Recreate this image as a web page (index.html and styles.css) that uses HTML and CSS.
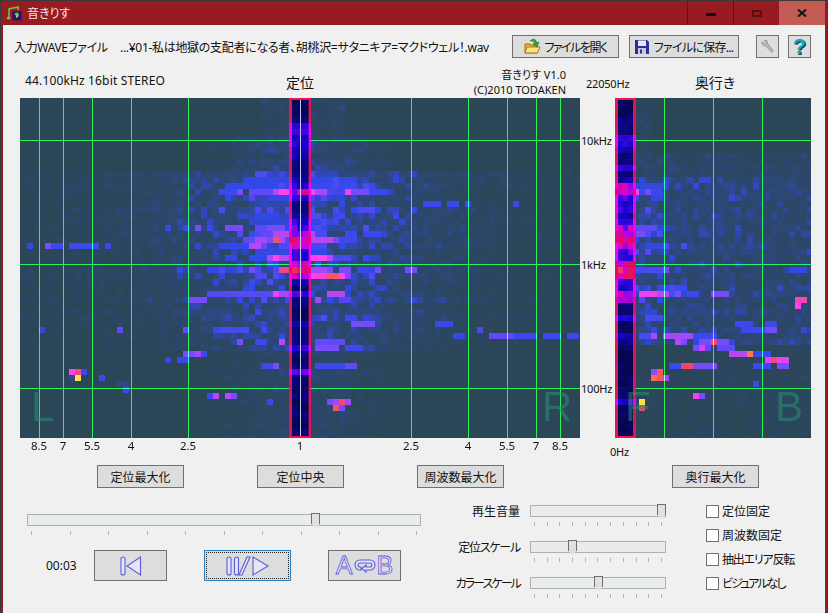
FILE: index.html
```html
<!DOCTYPE html>
<html lang="ja">
<head>
<meta charset="utf-8">
<title>音きりす</title>
<link rel="stylesheet" href="styles.css">
</head>
<body>
<div class="window">
  <header class="titlebar">
    <svg class="app-icon" width="16" height="16" viewBox="0 0 16 16">
      <rect x="6" y="6" width="10" height="10" fill="#7a1030"/>
      <rect x="7" y="7" width="8" height="8" fill="#0c1a90"/>
      <path d="M10 8l3 1-1 3-2 1z" fill="#e8c040"/>
      <path d="M3 13V4l9-2v3" fill="none" stroke="#6fc040" stroke-width="1.6"/>
      <ellipse cx="2.6" cy="13" rx="2" ry="1.6" fill="#6fc040"/>
      <ellipse cx="10.6" cy="9" rx="2" ry="1.6" fill="#6fc040"/>
    </svg>
    <span class="title-text">音きりす</span>
    <div class="win-buttons">
      <div class="win-btn"><span class="glyph-min"></span></div>
      <div class="win-btn"><span class="glyph-max"></span></div>
      <div class="win-btn win-close">
        <svg width="10" height="8" viewBox="0 0 10 8"><path d="M1 0.5l8 7M9 0.5l-8 7" stroke="#111" stroke-width="2" fill="none"/></svg>
      </div>
    </div>
  </header>

  <main class="client">
    <div class="toprow">
      <span class="input-label">入力WAVEファイル</span>
      <span class="path">...¥01-私は地獄の支配者になる者、胡桃沢=サタニキア=マクドウェル！.wav</span>
      <button class="btn btn-open">
        <svg width="17" height="17" viewBox="0 0 17 17">
          <path d="M1 6h5l1 1h6v8H1z" fill="#e8b830" stroke="#9a7010"/>
          <path d="M3 9h13l-2.500 6H1z" fill="#fbe27a" stroke="#a87c18"/>
          <path d="M6 3c3-3 6-2 7 2l2-1-2 5-4-3 2-.5C10 3.500 8 2.500 6 3z" fill="#3aa030" stroke="#1c6a1c" stroke-width=".6"/>
        </svg>
        <span class="label-open">ファイルを開く</span>
      </button>
      <button class="btn btn-save">
        <svg width="14" height="14" viewBox="0 0 14 14">
          <path d="M0 0h12l2 2v12H0z" fill="#2a2f9c"/>
          <rect x="3" y="0.500" width="8" height="5.500" fill="#e8e8f4"/>
          <rect x="3" y="8" width="8" height="6" fill="#c8c8dc"/>
          <rect x="5" y="9.500" width="2" height="4" fill="#2a2f9c"/>
        </svg>
        <span class="label-save">ファイルに保存...</span>
      </button>
      <button class="btn btn-icon btn-wrench">
        <svg width="13" height="14" viewBox="0 0 13 14">
          <path d="M1 1.500l2 2 1.500-.5.500-1.500-2-1.500c2-.5 4 1 3.500 3.500l6 7.500-1.500 1.500L4.500 6C2 6.500 .5 3.500 1 1.500z" fill="#b8b8b8" stroke="#8a8a8a" stroke-width=".7"/>
        </svg>
      </button>
      <button class="btn btn-icon btn-help"><span class="help-mark">?</span></button>
    </div>

    <div class="panels">
      <div class="caption-main">
        <span class="format">44.100kHz 16bit STEREO</span>
        <span class="axis-title">定位</span>
        <span class="version">音きりす V1.0<br>(C)2010 TODAKEN</span>
      </div>
      <div class="hz-scale">
        <span class="hz" style="left:6px;top:26px">22050Hz</span>
        <span class="hz" style="left:1px;top:83px">10kHz</span>
        <span class="hz" style="left:1px;top:207px">1kHz</span>
        <span class="hz" style="left:1px;top:331px">100Hz</span>
        <span class="hz" style="left:30px;top:394px">0Hz</span>
      </div>
      <div class="caption-depth"><span class="axis-title">奥行き</span></div>

      <div class="spectrum">
        <canvas id="pan" width="560" height="340"></canvas>
        <span class="corner corner-l">L</span>
        <span class="corner corner-r">R</span>
      </div>
      <div class="spectrum spectrum-depth">
        <canvas id="depth" width="196" height="340"></canvas>
        <span class="corner corner-f">F</span>
        <span class="corner corner-b">B</span>
      </div>

      <div class="pan-ticks">
        <span class="pan-tick" style="left:19px">8.5</span>
        <span class="pan-tick" style="left:43px">7</span>
        <span class="pan-tick" style="left:72px">5.5</span>
        <span class="pan-tick" style="left:111px">4</span>
        <span class="pan-tick" style="left:168px">2.5</span>
        <span class="pan-tick" style="left:280px">1</span>
        <span class="pan-tick" style="left:391px">2.5</span>
        <span class="pan-tick" style="left:448px">4</span>
        <span class="pan-tick" style="left:487px">5.5</span>
        <span class="pan-tick" style="left:516px">7</span>
        <span class="pan-tick" style="left:540px">8.5</span>
      </div>
      <div class="tick-spacer"></div>

      <div class="pan-actions">
        <button class="btn btn-wide">定位最大化</button>
        <button class="btn btn-wide">定位中央</button>
        <button class="btn btn-wide">周波数最大化</button>
      </div>
      <div class="depth-actions">
        <button class="btn btn-wide">奥行最大化</button>
      </div>
    </div>

    <div class="bottom">
      <div class="transport">
        <div class="slider slider-seek">
          <div class="track"><span class="thumb" style="left:283px"></span></div>
          <div class="ticks"></div>
        </div>
        <div class="transport-row">
          <span class="time">00:03</span>
          <button class="btn btn-media btn-skip">
            <svg width="22" height="20" viewBox="0 0 22 20">
              <rect x="1" y="1" width="4" height="18" rx="2" class="outline"/>
              <path d="M20.500 1v18L7 10z" class="outline"/>
            </svg>
          </button>
          <button class="btn btn-media btn-play">
            <span class="focus-ring">
              <svg width="43" height="20" viewBox="0 0 43 20">
                <rect x="1" y="1" width="4" height="18" rx="2" class="outline"/>
                <rect x="8.500" y="1" width="4" height="18" rx="2" class="outline"/>
                <path d="M21 1h3l-8 18h-3z" class="outline"/>
                <path d="M27 1v18l15-9z" class="outline"/>
              </svg>
            </span>
          </button>
          <button class="btn btn-media btn-ab">
            <span class="ab-letter">A</span>
            <svg width="24" height="14" viewBox="0 0 24 14">
              <path d="M7 1h10a5 5 0 0 1 0 10h-4v2l-4-3.500 4-3.500v2h4a2 2 0 0 0 0-4H7a2 2 0 0 0 0 4h1v3H7A5 5 0 0 1 7 1z" class="outline"/>
            </svg>
            <span class="ab-letter">B</span>
          </button>
        </div>
      </div>

      <div class="mixer">
        <div class="mixer-row">
          <span class="mixer-label">再生音量</span>
          <div class="slider slider-small">
            <div class="track"><span class="thumb" style="left:126px"></span></div>
            <div class="ticks"></div>
          </div>
        </div>
        <div class="mixer-row">
          <span class="mixer-label tight-1">定位スケール</span>
          <div class="slider slider-small">
            <div class="track"><span class="thumb" style="left:37px"></span></div>
            <div class="ticks"></div>
          </div>
        </div>
        <div class="mixer-row">
          <span class="mixer-label tight-2">カラースケール</span>
          <div class="slider slider-small">
            <div class="track"><span class="thumb" style="left:63px"></span></div>
            <div class="ticks"></div>
          </div>
        </div>
      </div>

      <div class="checks">
        <label class="check"><span class="box"></span>定位固定</label>
        <label class="check"><span class="box"></span>周波数固定</label>
        <label class="check tight-1"><span class="box"></span>抽出エリア反転</label>
        <label class="check tight-2"><span class="box"></span>ビジュアルなし</label>
      </div>
    </div>
  </main>
</div>
<script src="script.js"></script>
</body>
</html>
```
FILE: styles.css
```css
* { box-sizing: border-box; }
html, body { margin: 0; padding: 0; }
body {
  width: 828px;
  height: 613px;
  overflow: hidden;
  font-family: "Noto Sans", "Noto Sans CJK JP", sans-serif;
  font-size: 12px;
  color: #111;
  font-feature-settings: "palt";
}
.window {
  width: 828px;
  height: 613px;
  border: 1px solid #3a3a3a;
  background: #971b20;
  display: flex;
  flex-direction: column;
}
.titlebar {
  height: 24px;
  flex: none;
  display: flex;
  align-items: center;
  padding-left: 5px;
  color: #f4e4e4;
}
.app-icon { flex: none; }
.title-text { margin-left: 5px; font-size: 12px; }
.win-buttons { margin-left: auto; margin-right: 2px; display: flex; height: 24px; }
.win-btn {
  width: 46px;
  display: flex;
  align-items: center;
  justify-content: center;
  border-left: 1px solid #5c1216;
}
.win-close { background: #c25b52; border-left: 0; }
.glyph-min { width: 10px; height: 3px; background: #111; margin-top: 3px; }
.glyph-max { width: 10px; height: 7px; border: 2px solid #5a0f14; }

.client {
  flex: 1;
  margin: 0 2px 2px;
  background: #f0f0f0;
  padding-top: 10px;
  display: flex;
  flex-direction: column;
}
.toprow {
  height: 23px;
  flex: none;
  display: flex;
  align-items: center;
  padding: 0 14px 0 11px;
}
.input-label { width: 106px; flex: none; letter-spacing: -.35px; }
.path { flex: 1; white-space: nowrap; letter-spacing: -.3px; }

.btn {
  border: 1px solid #707070;
  background: #dddddd;
  font: inherit;
  color: #111;
  padding: 0;
  display: flex;
  align-items: center;
  justify-content: center;
  flex: none;
}
.btn-open { width: 107px; height: 23px; gap: 3px; }
.btn-save { width: 110px; height: 23px; gap: 5px; margin-left: 10px; }
.label-open { letter-spacing: -1.500px; }
.label-save { letter-spacing: -.700px; }
.btn-icon { width: 23px; height: 23px; }
.btn-wrench { margin-left: 17px; }
.btn-help { margin-left: 9px; }
.help-mark {
  font-family: "Liberation Sans", sans-serif;
  font-weight: 700;
  font-size: 22px;
  line-height: 22px;
  color: #10a8b8;
  text-shadow: 1px 1px 0 #123050;
}

.panels {
  flex: none;
  display: grid;
  grid-template-columns: 560px 35px 196px;
  grid-template-rows: 40px 340px 27px 23px;
  padding-left: 17px;
}
.caption-main {
  grid-column: 1;
  grid-row: 1;
  display: grid;
  grid-template-columns: 1fr auto 1fr;
  align-items: start;
}
.format { margin: 15px 0 0 5px; line-height: 16px; white-space: nowrap; letter-spacing: .15px; }
.axis-title { margin-top: 15px; font-size: 14px; line-height: 20px; display: block; }
.version {
  margin: 9px 14px 0 0;
  text-align: right;
  line-height: 15px;
  font-size: 11px;
  white-space: nowrap;
}
.hz-scale { grid-column: 2; grid-row: 1 / 4; position: relative; }
.hz {
  position: absolute;
  transform: translateY(-50%);
  font-size: 11px;
  line-height: 14px;
  white-space: nowrap;
  letter-spacing: -.2px;
}
.caption-depth { grid-column: 3; grid-row: 1; display: flex; justify-content: center; padding-left: 4px; }

.spectrum { grid-column: 1; grid-row: 2; position: relative; height: 340px; }
.spectrum-depth { grid-column: 3; }
.spectrum canvas { display: block; }
.corner {
  position: absolute;
  top: 285px;
  font-family: "Liberation Sans", sans-serif;
  font-size: 42px;
  line-height: 48px;
  color: rgba(40, 150, 120, .5);
}
.corner-l { left: 11px; }
.corner-r { left: 522px; }
.corner-f { left: 10px; }
.corner-b { left: 160px; }

.pan-ticks { grid-column: 1; grid-row: 3; position: relative; }
.tick-spacer { grid-column: 3; grid-row: 3; }
.pan-tick {
  position: absolute;
  top: 1px;
  transform: translateX(-50%);
  line-height: 14px;
  font-size: 11.500px;
}
.pan-actions { grid-column: 1; grid-row: 4; display: flex; gap: 73px; padding-left: 77px; }
.depth-actions { grid-column: 3; grid-row: 4; padding-left: 57px; }
.btn-wide { width: 87px; height: 23px; }

.bottom {
  flex: 1;
  display: flex;
  padding: 17px 0 0 24px;
}
.transport { width: 394px; flex: none; padding-top: 9px; }
.track {
  position: relative;
  height: 12px;
  background: #e8ecec;
  border: 1px solid #b0b0b0;
}
.thumb {
  position: absolute;
  top: -2px;
  width: 9px;
  height: 15px;
  background: #e0e0e0;
  border: 1px solid #707070;
  border-bottom: 0;
  clip-path: polygon(0 0, 100% 0, 100% 70%, 50% 100%, 0 70%);
}
.ticks {
  display: flex;
  justify-content: space-between;
  padding: 0 4px;
  margin-top: 5px;
  height: 4px;
}
.ticks i { display: block; width: 1px; height: 4px; background: #b4b4b4; }
.transport-row { display: flex; align-items: center; margin-top: 15px; height: 31px; }
.time { width: 67px; padding-left: 19px; flex: none; }
.btn-media { height: 31px; }
.btn-skip { width: 73px; }
.btn-play {
  width: 87px;
  margin-left: 37px;
  border-color: #2f7fbf;
  padding: 1px;
}
.focus-ring {
  width: 100%;
  height: 100%;
  border: 1px dotted #222;
  display: flex;
  align-items: center;
  justify-content: center;
}
.btn-ab { width: 73px; margin-left: 37px; }
.outline { fill: #e6e6f4; stroke: #5c5cd8; stroke-width: 1.100; }
.ab-letter {
  font-family: "Liberation Sans", sans-serif;
  font-size: 25px;
  line-height: 25px;
  color: #e6e6f4;
  -webkit-text-stroke: .8px #5c5cd8;
}

.mixer { width: 245px; flex: none; margin-left: 0; }
.mixer-row { height: 36px; display: flex; align-items: flex-start; gap: 10px; }
.mixer-label { flex: 1; text-align: right; line-height: 12px; margin-top: 1px; white-space: nowrap; }
.slider-small { width: 136px; flex: none; }

.checks { margin-left: 40px; }
.check { height: 24px; display: flex; align-items: flex-start; gap: 3px; line-height: 13px; white-space: nowrap; }
.box { width: 13px; height: 13px; background: #fff; border: 1px solid #707070; flex: none; }
.tight-1 { letter-spacing: -1.200px; }
.tight-2 { letter-spacing: -1.900px; }
```
FILE: script.js
```js
document.querySelectorAll('.ticks').forEach(function (el) {
  for (var i = 0; i < 11; i++) el.appendChild(document.createElement('i'));
});

function rng(seed) {
  return function () {
    seed |= 0; seed = seed + 0x6D2B79F5 | 0;
    var t = Math.imul(seed ^ seed >>> 15, 1 | seed);
    t = t + Math.imul(t ^ t >>> 7, 61 | t) ^ t;
    return ((t ^ t >>> 14) >>> 0) / 4294967296;
  };
}
function ramp(stops, v) {
  if (v <= stops[0][0]) return stops[0].slice(1);
  for (var i = 1; i < stops.length; i++) {
    if (v <= stops[i][0]) {
      var a = stops[i - 1], b = stops[i], k = (v - a[0]) / (b[0] - a[0]);
      return [a[1] + (b[1] - a[1]) * k, a[2] + (b[2] - a[2]) * k, a[3] + (b[3] - a[3]) * k];
    }
  }
  return stops[stops.length - 1].slice(1);
}
function css(c) { return 'rgb(' + c.map(Math.round).join(',') + ')'; }

var HEAT = [[0, 43, 70, 87], [.2, 45, 72, 130], [.4, 50, 72, 235], [.55, 120, 75, 250], [.7, 255, 65, 240], [.82, 240, 70, 105], [.92, 255, 120, 70], [1, 255, 225, 70]];
var BAND = [[0, 2, 2, 72], [.25, 20, 0, 215], [.45, 120, 0, 245], [.6, 225, 0, 215], [.8, 240, 0, 95], [1, 255, 60, 90]];
var EDGE = [[0, 240, 16, 80], [.15, 240, 16, 80], [.3, 255, 0, 240], [.6, 255, 0, 240], [.75, 240, 0, 95], [1, 240, 16, 80]];
var CELL = 6;

function paint(id, o) {
  var cv = document.getElementById(id), g = cv.getContext('2d');
  var W = cv.width, H = cv.height, r = rng(o.seed);
  var cols = Math.ceil(W / CELL) + 1, rows = Math.ceil(H / CELL) + 1;
  var grid = [];
  for (var j = 0; j < rows; j++) {
    grid[j] = [];
    var y = j * CELL + 98 + 1;
    var gain = 0.6 + r() * 0.5;
    for (var i = 0; i < cols; i++) {
      var x = i * CELL + o.x0;
      var n = o.noise(x, y) * gain * (0.3 + r() * r() * 1.4);
      grid[j][i] = n < 0.025 ? 0 : Math.min(n, .46);
    }
  }
  o.features.forEach(function (f) {
    var j = Math.floor((f[0] - 99) / CELL);
    if (j < 0 || j >= rows) return;
    for (var x = f[1]; x < f[2]; x += CELL) {
      var i = Math.floor((x - o.x0) / CELL);
      if (i >= 0 && i < cols) grid[j][i] = Math.max(grid[j][i], f[3]);
    }
  });
  g.fillStyle = css(HEAT[0].slice(1));
  g.fillRect(0, 0, W, H);
  for (j = 0; j < rows; j++) for (i = 0; i < cols; i++) {
    if (grid[j][i] > 0) {
      g.fillStyle = css(ramp(HEAT, grid[j][i]));
      g.fillRect(i * CELL + o.x0 - o.left, j * CELL + 1, CELL, CELL);
    }
  }
  g.globalCompositeOperation = 'lighten';
  g.fillStyle = '#20f050';
  o.vlines.forEach(function (x) { g.fillRect(x - o.left, 0, 1, H); });
  [140, 264, 388].forEach(function (y) { g.fillRect(0, y - 98, W, 1); });
  g.globalCompositeOperation = 'source-over';

  var b = o.band, bw = b[1] - b[0];
  g.globalAlpha = .93;
  for (j = 0; j < o.profile.length; j++) {
    var v = +o.profile[j] / 10, yy = j * CELL + 1;
    g.fillStyle = css(ramp(EDGE, v));
    g.fillRect(b[0] - o.left, yy, 3, CELL);
    g.fillRect(b[1] - o.left - 3, yy, 3, CELL);
    for (var c = 0; c < 3; c++) {
      var vv = v > 0 ? v * (0.65 + r() * 0.55) : (r() < .3 ? .07 : 0.02);
      g.fillStyle = css(ramp(BAND, vv));
      g.fillRect(b[0] - o.left + 3 + c * (bw - 6) / 3, yy, Math.ceil((bw - 6) / 3), CELL);
    }
  }
  g.globalAlpha = 1;
  g.fillStyle = '#f0104f';
  g.fillRect(b[0] - o.left, 0, bw, 2);
  g.fillRect(b[0] - o.left, H - 2, bw, 2);
  if (o.center) {
    g.fillStyle = '#c8c8ec';
    g.fillRect(o.center - o.left, 2, 1, H - 4);
  }
}

paint('pan', {
  seed: 20, x0: 21, left: 20,
  vlines: [39, 63, 92, 131, 188, 411, 468, 507, 536, 560],
  band: [289, 311], center: 300,
  profile: '000133332211123631123478633686214110021114101410010010010',
  noise: function (x, y) {
    var d = Math.abs(x - 300), s, v;
    if (y < 135) return d < 40 ? .12 : 0;
    if (y < 170) { s = 70; v = .2 + (y - 135) * .003; }
    else if (y < 300) { s = 120; v = .45; }
    else if (y < 350) { s = 110; v = .3; }
    else { s = 70; v = .14; }
    return v * Math.exp(-d * d / (s * s)) + (y > 165 && y < 345 ? .045 : .012);
  },
  features: [
    [171,265,290,.3],[171,312,340,.3],
    [177,245,290,.38],[177,312,358,.4],[183,225,290,.4],[183,312,360,.42],[183,360,372,.3],
    [189,219,240,.42],[189,240,246,.55],[189,250,258,.5],[189,263,275,.5],[189,275,282,.62],[189,282,289,.7],
    [189,312,318,.7],[189,318,326,.6],[189,326,336,.45],[189,336,345,.42],[189,346,352,.68],[189,352,366,.55],[189,366,375,.42],[189,380,392,.42],
    [195,245,270,.3],[195,270,290,.38],[195,312,330,.34],[201,255,290,.28],[201,312,325,.28],[203,424,437,.42],[203,449,456,.42],[203,468,474,.42],[203,515,520,.42],
    [207,265,290,.25],[213,250,290,.3],[213,312,325,.36],[215,256,262,.38],[215,262,275,.4],[219,250,290,.36],[219,312,335,.38],
    [225,165,171,.4],[225,187,190,.42],[225,198,204,.55],[225,207,213,.42],[225,225,243,.55],[225,255,262,.5],[225,262,268,.42],[225,270,285,.55],[225,312,330,.42],
    [231,250,262,.42],[231,262,272,.5],[231,275,289,.62],[231,312,318,.62],[231,320,330,.45],[231,350,360,.42],[231,365,380,.42],
    [237,245,255,.5],[237,255,262,.6],[237,262,272,.55],[237,277,283,.85],[237,283,289,.62],[237,312,335,.62],[237,335,340,.55],
    [243,20,26,.2],[243,32,38,.4],[243,45,51,.55],[243,51,63,.42],[243,70,95,.42],[243,107,113,.42],[243,200,205,.38],[243,220,240,.4],[243,243,249,.4],[243,250,262,.62],[243,262,268,.5],[243,280,289,.45],[243,312,330,.44],
    [249,255,290,.38],[249,312,325,.4],
    [258,225,232,.38],[258,250,270,.4],[258,270,275,.6],[258,275,281,.7],[258,281,289,.62],[258,312,330,.7],[258,330,336,.62],[258,336,352,.45],
    [270,178,184,.4],[270,209,214,.4],[270,215,222,.4],[270,252,258,.55],[270,282,289,.8],[270,312,330,.6],[270,325,336,.55],[270,342,350,.55],[270,360,368,.42],[270,380,386,.55],[270,405,415,.55],
    [276,310,320,.7],[276,320,330,.72],[276,330,338,.85],[276,338,345,.7],[276,345,350,.55],
    [293,207,275,.48],[293,275,281,.68],[293,282,289,.6],[293,312,318,.4],[293,331,340,.62],[293,340,345,.62],
    [299,192,198,.55],[299,200,212,.55],[299,320,325,.6],[305,190,197,.3],
    [320,350,362,.42],[326,355,375,.55],
    [332,40,46,.35],[332,120,126,.5],[332,188,194,.5],[332,213,220,.42],[332,220,235,.45],[332,240,250,.45],[332,265,270,.42],
    [338,493,512,.5],[332,480,486,.45],[338,513,523,.42],[338,528,536,.42],[338,543,560,.42],[338,570,580,.42],[338,453,462,.38],[326,440,455,.42],
    [344,240,245,.55],[344,256,263,.42],[344,283,289,.62],[344,320,345,.5],[350,320,340,.55],[350,345,360,.42],
    [355,188,195,.55],[355,195,200,.6],[355,200,207,.42],[361,165,170,.4],[361,180,188,.42],
    [368,265,272,.42],[368,278,284,.55],[368,320,345,.42],[368,345,352,.5],
    [370,70,76,.7],[370,76,82,.8],[370,82,88,.42],[376,76,82,1],[376,70,76,.2],[376,103,109,.42],
    [382,120,130,.2],[388,127,132,.42],[395,207,213,.42],[395,213,219,.62],[395,225,231,.62],[395,231,237,.55],[400,272,278,.42],
    [400,331,337,.55],[400,337,343,.6],[400,343,349,.8],[400,349,355,.6],[406,337,343,.85],[406,343,349,.55]
  ]
});

paint('depth', {
  seed: 7, x0: 615, left: 615,
  vlines: [664, 713, 762],
  band: [615, 636], center: 0,
  profile: '000111332113126843323677643898336711300210000000003000000',
  noise: function (x, y) {
    var d = x - 636, v;
    if (y < 150) return d < 10 ? .08 : 0;
    if (y < 175) v = .14;
    else if (y < 300) v = .24 + .22 * Math.exp(-d / 40);
    else if (y < 345) v = .24 + .12 * Math.exp(-d / 40);
    else if (y < 395) v = .055;
    else v = .05;
    return v;
  },
  features: [
    [183,636,665,.38],[189,636,665,.42],[191,636,642,.7],[191,645,650,.55],[270,636,665,.45],[270,665,671,.55],[227,638,660,.5],[233,638,650,.55],
    [293,640,655,.68],[293,655,668,.62],[293,668,680,.45],[293,676,680,.55],[293,690,700,.42],[293,716,730,.55],
    [297,800,811,.75],[303,795,800,.7],[327,742,768,.42],[327,768,778,.55],[323,740,755,.42],[323,767,775,.42],
    [333,640,655,.45],[333,655,661,.6],[333,665,680,.6],[333,685,695,.6],[333,698,718,.42],
    [339,675,681,.62],[339,684,690,.55],[339,700,710,.55],[339,712,718,.82],[339,718,725,.55],
    [345,693,703,.55],[345,703,709,.65],[345,710,716,.5],[345,720,735,.5],
    [351,733,750,.62],[351,752,758,.92],[351,757,770,.42],[357,767,775,.67],[357,772,778,.8],[357,778,785,.67],
    [363,757,775,.42],[363,777,785,.55],[367,674,685,.42],[367,685,692,.82],[367,693,700,.55],[367,700,714,.55],[367,714,718,.45],
    [373,654,660,.58],[373,660,664,.85],[379,654,660,.9],[379,660,666,.85],[379,666,670,.6],[385,758,762,.42],
    [395,698,704,.68],[395,704,708,.55],[400,639,644,.7],[400,644,649,1],[406,639,644,.5],[406,644,649,.82],
    [270,790,805,.4],[225,640,668,.3],[245,645,660,.38],[285,660,680,.42],[315,645,660,.45]
  ]
});
```
